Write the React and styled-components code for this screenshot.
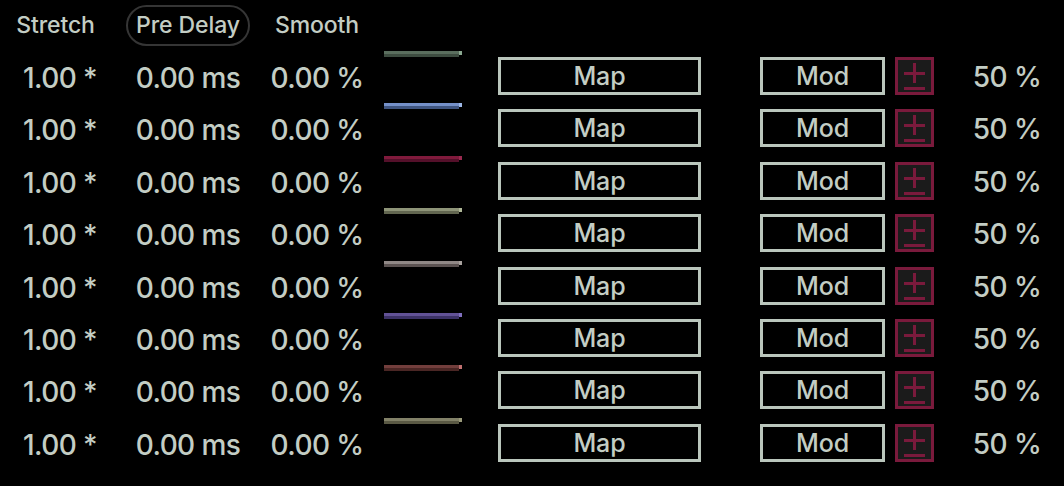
import React from "react";
import styled, { createGlobalStyle } from "styled-components";

const Global = createGlobalStyle`
  html, body { margin: 0; padding: 0; background: #000; }
  body { font-family: Inter, "Noto Sans", sans-serif; color: #c3cdc4; font-weight: 500; }
`;

const Page = styled.div`
  width: 1064px;
  height: 486px;
  background: #000;
  overflow: hidden;
`;

const Header = styled.div`
  display: flex;
  align-items: center;
  height: 50px;
`;

const HeadLabel = styled.div`
  width: ${(p) => p.$w}px;
  margin-left: ${(p) => p.$ml || 0}px;
  text-align: center;
  font-size: 23px;
  line-height: 50px;
  letter-spacing: -0.1px;
  white-space: nowrap;
`;

const Pill = styled.div`
  box-sizing: border-box;
  width: 124px;
  height: 41px;
  margin-left: ${(p) => p.$ml || 0}px;
  border: 2px solid #353535;
  border-radius: 21px;
  display: flex;
  align-items: center;
  justify-content: center;
  font-size: 23px;
  letter-spacing: -0.1px;
  white-space: nowrap;
`;

const Rows = styled.div`
  display: grid;
  grid-auto-rows: 52.4px;
`;

const Row = styled.div`
  display: flex;
  align-items: flex-start;
`;

const Value = styled.div`
  width: ${(p) => p.$w}px;
  margin-left: ${(p) => p.$ml || 0}px;
  text-align: center;
  font-size: 28px;
  line-height: 56px;
  letter-spacing: -0.6px;
  white-space: nowrap;
`;

const BarCell = styled.div`
  width: 78px;
  margin-left: ${(p) => p.$ml || 0}px;
  padding-top: ${(p) => p.$top}px;
  display: flex;
  align-items: flex-start;
`;

const Bar = styled.div`
  width: 75px;
  height: 6px;
  background: linear-gradient(
    to bottom,
    ${(p) => p.$c} 0,
    ${(p) => p.$c} 55%,
    ${(p) => p.$d} 55%,
    ${(p) => p.$d} 100%
  );
`;

const BarTip = styled.div`
  width: 3px;
  height: 4px;
  background: ${(p) => p.$c};
`;

const OutlineButton = styled.div`
  box-sizing: border-box;
  width: ${(p) => p.$w}px;
  height: 38px;
  margin-left: ${(p) => p.$ml}px;
  margin-top: 7px;
  border: 3px solid #bac6bc;
  display: flex;
  align-items: center;
  justify-content: center;
  font-size: 25px;
  letter-spacing: -0.1px;
  color: #c3cdc4;
`;

const PlusMinus = styled.div`
  box-sizing: border-box;
  width: 39px;
  height: 38px;
  margin-left: 10px;
  margin-top: 7px;
  border: 3px solid #7a1a3c;
  background: #1b1b1b;
  display: flex;
`;

const Percent = styled.div`
  width: 74px;
  margin-left: 36px;
  text-align: center;
  font-size: 28px;
  line-height: 54px;
  letter-spacing: -0.6px;
  white-space: nowrap;
`;

const bars = [
  ["#5a6e5e", "#3e4d41", "#8aa890"],
  ["#7490c8", "#3f5580", "#9db8e8"],
  ["#801a3c", "#54102a", "#9a2a50"],
  ["#8e9478", "#626650", "#b0b898"],
  ["#908886", "#5c5352", "#a8a29e"],
  ["#625296", "#3c3266", "#8070c0"],
  ["#723e3c", "#4a2624", "#c07070"],
  ["#828168", "#5a5944", "#9a9a7a"],
];

function PM() {
  return (
    <PlusMinus>
      <svg width="33" height="32" viewBox="0 0 33 32">
        <g stroke="#7a1a3c" strokeWidth="3" fill="none">
          <line x1="6" y1="13.5" x2="27" y2="13.5" />
          <line x1="16.5" y1="3" x2="16.5" y2="23" />
          <line x1="6" y1="28.5" x2="27" y2="28.5" />
        </g>
      </svg>
    </PlusMinus>
  );
}

export default function App() {
  return (
    <Page>
      <Global />
      <Header>
        <HeadLabel $w={111}>Stretch</HeadLabel>
        <Pill $ml={15}>Pre Delay</Pill>
        <HeadLabel $w={120} $ml={7}>Smooth</HeadLabel>
      </Header>
      <Rows>
        {bars.map(([c, d, t], i) => (
          <Row key={i}>
            <Value $w={120}>1.00 *</Value>
            <Value $w={124} $ml={6}>0.00 ms</Value>
            <Value $w={120} $ml={7}>0.00 %</Value>
            <BarCell $ml={7} $top={1}>
              <Bar $c={c} $d={d} />
              <BarTip $c={t} />
            </BarCell>
            <OutlineButton $w={203} $ml={36}>Map</OutlineButton>
            <OutlineButton $w={125} $ml={59}>Mod</OutlineButton>
            <PM />
            <Percent>50 %</Percent>
          </Row>
        ))}
      </Rows>
    </Page>
  );
}
